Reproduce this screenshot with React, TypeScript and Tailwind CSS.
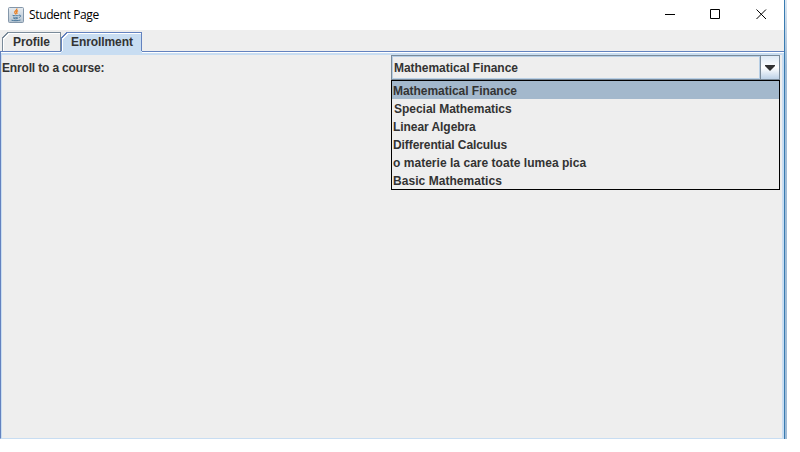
import React from "react";

const courses = [
  { name: "Mathematical Finance", style: "bg-[#a3b8cc] pl-[1px] tracking-[-0.04px]" },
  { name: "Special Mathematics", style: "pl-[2px] tracking-[-0.02px]" },
  { name: "Linear Algebra", style: "pl-[1px] tracking-[-0.06px]" },
  { name: "Differential Calculus", style: "pl-[1px] tracking-[-0.09px]" },
  { name: "o materie la care toate lumea pica", style: "pl-[1px] tracking-[0.03px]" },
  { name: "Basic Mathematics", style: "pl-[1px] tracking-[0.05px]" },
];

function JavaIcon() {
  return (
    <svg className="-mt-px ml-2 h-4 w-4" viewBox="0 0 16 16" fill="none">
      <defs>
        <linearGradient id="tile" x1="0" y1="0" x2="0" y2="1">
          <stop stopColor="#e6ebf0" />
          <stop offset="1" stopColor="#b5c4d1" />
        </linearGradient>
      </defs>
      <rect x=".5" y=".5" width="15" height="15" rx="1" fill="url(#tile)" stroke="#8497aa" />
      <path d="M4.500 7.700h6.300l-.8 3.300H5.500z" fill="#edf2f6" />
      <path d="M8.800 1.500c.5 2-3 2.500-2 4.200l1 1.600M10 3.700c-2 1-1.600 1.500-1.100 2.100.3.500 0 .9-.4 1.200" stroke="#e98228" strokeWidth="1.3" />
      <path d="M4.500 8.300c1.700.6 4.600.6 6.200 0M5 10c1.600.5 3.800.5 5.300 0M5.500 11.500c1.300.4 3 .4 4.200 0M3.500 13.200c2.500.7 6.500.7 9-.2M11 8.200c2.400-.4 2.100 1.600.2 2.200" stroke="#49779b" />
    </svg>
  );
}

function Tabs() {
  return (
    <div className="relative h-[24px] shrink-0 bg-[#eee]">
      <svg className="absolute inset-0 h-[24px] w-full" viewBox="0 0 784 24" preserveAspectRatio="none" shapeRendering="crispEdges">
        <path d="M0 21.500H784" stroke="#6382bf" />
        <path d="M1 22.500H784" stroke="#fff" />
        <path d="M1 23.500H784" stroke="#c8ddf2" />
        <path d="M2.500 21V8L8 2.500H60.500V21" fill="#eee" stroke="#7a8a99" />
        <path d="M3.500 21V9L9 3.500H60" fill="none" stroke="#fff" />
        <path d="M61 24V8L67 2H142V24Z" fill="#c8ddf2" />
        <path d="M61.500 21V8L67 2.500H141.500V21" fill="none" stroke="#6382bf" />
        <path d="M62.500 21V9L68 3.500H141" fill="none" stroke="#fff" />
        <path d="M0.500 21V24" stroke="#6382bf" />
      </svg>
      <div className="relative flex tracking-[-0.08px] leading-[24px]">
        <span className="w-[58px] pl-[13px]">Profile</span>
        <span className="pl-[13px]">Enrollment</span>
      </div>
    </div>
  );
}

export default function App() {
  return (
    <div className="h-[452px] w-[800px] bg-white font-['Liberation_Sans',Arial,sans-serif] text-[12px] font-bold text-[#333]">
      <main className="flex h-[439px] w-[787px]">
        <div className="flex w-[784px] flex-col">
          <header className="flex h-[30px] shrink-0 items-center bg-white">
            <JavaIcon />
            <span className="ml-[5px] font-['Open_Sans','Noto_Sans',sans-serif] text-[12px] font-normal tracking-[-0.36px] text-black">Student Page</span>
            <svg className="ml-auto mr-[17px] h-[12px] w-[103px]" viewBox="0 0 103 12" fill="none" stroke="#000">
              <path d="M1 5.500h10M46.500 .5h9v9h-9zM92.500 .5l9.500 9.500m0-9.500l-9.500 9.500" />
            </svg>
          </header>
          <Tabs />
          <section className="flex grow border-b border-l border-b-[#c8ddf2] border-l-[#6382bf] bg-[#eee]">
            <div className="flex grow border-l border-r-2 border-t border-[#c8ddf2]">
              <div className="w-[389px] tracking-[-0.16px] leading-[26px]">Enroll to a course:</div>
              <div className="w-[389px]">
                <div className="flex h-[25px] border border-[#7a8a99]">
                  <span className="grow border border-[#b8cfe5] pl-[1px] tracking-[-0.04px] leading-[22px]">Mathematical Finance</span>
                  <span className="flex w-[19px] items-center justify-center border-l border-[#7a8a99] bg-linear-to-b from-[#dfeaf5] via-white to-[#bcd1e7]">
                    <svg className="h-[6px] w-[10px]" viewBox="0 0 10 6"><path d="M0 0H10V1L5 6L0 1Z" fill="#333" /></svg>
                  </span>
                </div>
                <div className="h-[110px] border border-black bg-[#eee]">
                  {courses.map((course) => (
                    <div key={course.name} className={`h-[18px] leading-[20px] ${course.style}`}>{course.name}</div>
                  ))}
                </div>
              </div>
            </div>
          </section>
        </div>
        <div className="w-px bg-[#397bb0]" />
        <div className="w-[2px] bg-linear-to-b from-[#dce7f2] via-[#a0bbd6] via-15% to-[#a0bbd6]" />
      </main>
    </div>
  );
}
